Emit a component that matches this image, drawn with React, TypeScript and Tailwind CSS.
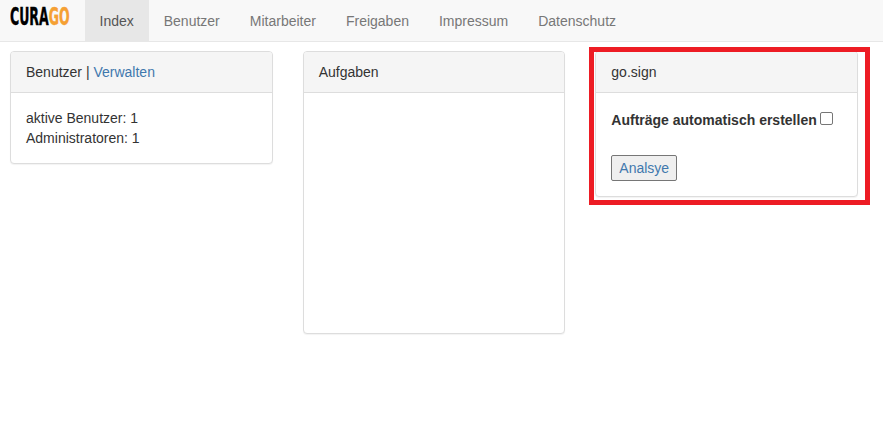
const NAV_ITEMS = ["Index", "Benutzer", "Mitarbeiter", "Freigaben", "Impressum", "Datenschutz"];

function Panel({ title, className, children }: { title: React.ReactNode; className?: string; children?: React.ReactNode }) {
  return (
    <div className={`rounded-[4px] border border-[#dddddd] bg-white shadow-[0_1px_1px_rgba(0,0,0,0.05)] ${className ?? ""}`}>
      <div className="h-[41px] rounded-t-[3px] border-b border-[#dddddd] bg-[#f5f5f5] px-[15px] pt-[10px] leading-[20px] text-[#333333]">
        {title}
      </div>
      {children}
    </div>
  );
}

export default function App() {
  return (
    <div className="relative min-h-[427px] bg-white text-[14px] leading-[20px] text-[#333333] font-['Liberation_Sans',Arial,sans-serif]">
      <nav className="flex h-[42px] items-stretch border-b border-[#e7e7e7] bg-[#f8f8f8]">
        <div className="flex w-[84.5px] items-center overflow-hidden pl-[10px]">
          <span className="mb-[8px] inline-block origin-left scale-x-[0.58] whitespace-nowrap text-[24px] leading-none font-bold text-black [-webkit-text-stroke:0.4px] font-['DejaVu_Sans_Condensed','DejaVu_Sans',sans-serif]">
            CURA<span className="text-[#f5a033]">GO</span>
          </span>
        </div>
        {NAV_ITEMS.map((item, i) => (
          <a
            key={item}
            className={`flex items-center px-[15px] ${i === 0 ? "bg-[#e7e7e7] text-[#555555]" : "text-[#777777]"}`}
          >
            {item}
          </a>
        ))}
      </nav>

      <div className="ml-[10px] mt-[9px] grid w-[848px] grid-cols-3 items-start gap-x-[30px]">
        <Panel title={<>Benutzer | <a className="text-[#3f78ad]">Verwalten</a></>}>
          <div className="p-[15px]">
            <div>aktive Benutzer: 1</div>
            <div>Administratoren: 1</div>
          </div>
        </Panel>
        <Panel title="Aufgaben" className="h-[283px]" />
        <Panel title="go.sign">
          <div className="px-[15px] pt-[17px] pb-[15px]">
            <label className="flex h-[20px] items-center font-bold">
              Aufträge automatisch erstellen
              <input type="checkbox" className="ml-[3px] mt-[-3px] h-[13px] w-[13px] appearance-none rounded-[2px] border border-[#767676] bg-white" />
            </label>
            <button className="mt-[25px] block h-[26px] rounded-[2px] border border-[#767676] bg-[#efefef] px-[7px] text-[#3f78ad]">
              Analsye
            </button>
          </div>
        </Panel>
      </div>

      <div className="pointer-events-none absolute left-[589px] top-[47px] h-[158px] w-[281px] border-[5px] border-[#ed1c24]" />
    </div>
  );
}
